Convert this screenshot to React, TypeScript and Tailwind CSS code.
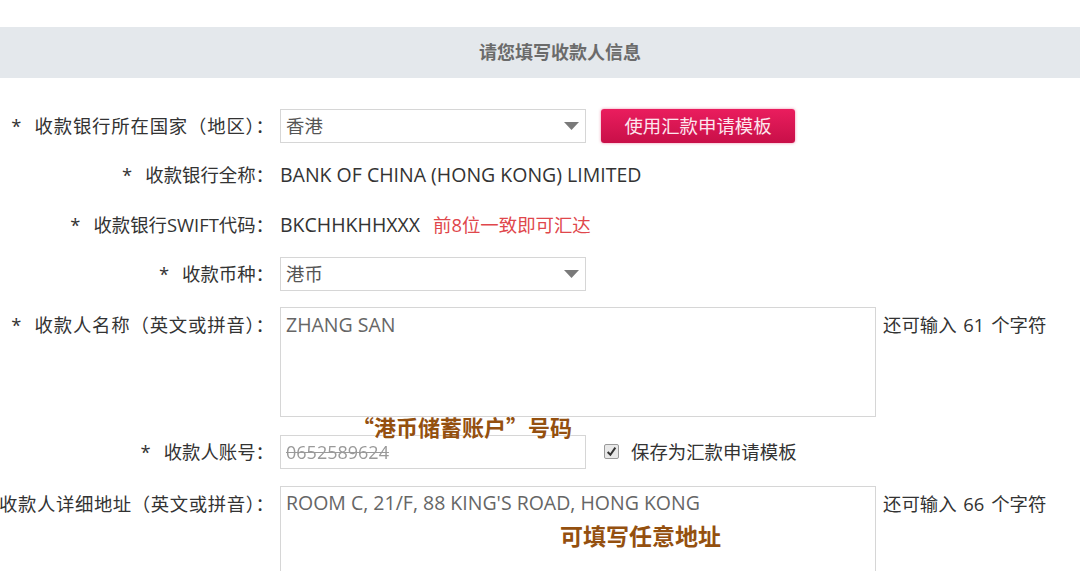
import React from 'react';

const cjk = { fontFamily: '"Open Sans", "Noto Sans CJK SC", sans-serif' };

function Arrow() {
    return (
        <svg width="15" height="8" viewBox="0 0 15 8" className="shrink-0">
            <path d="M0 0 H15 L7.5 8 Z" fill="#7a7a7a" />
        </svg>
    );
}

function Label({ children, star = true, top = false }: { children: React.ReactNode; star?: boolean; top?: boolean }) {
    return (
        <div className={`flex w-[274px] shrink-0 justify-end whitespace-nowrap text-[18.4px] leading-[22px] text-[#333] ${top ? 'pt-[7px]' : ''}`}>
            {star && <span className="mr-[13px]">*</span>}
            <span>{children}</span>
        </div>
    );
}

function Select({ value }: { value: string }) {
    return (
        <div className="flex h-[34px] w-[306px] items-center justify-between border border-[#d6d6d6] bg-white pl-[5px] pr-[6px] text-[18.4px] text-[#555]">
            <span>{value}</span>
            <Arrow />
        </div>
    );
}

function Counter({ n }: { n: number }) {
    return (
        <div className="ml-[7px] pt-[7px] text-[18.4px] leading-[22px] text-[#333] whitespace-nowrap">
            还可输入 <span className="px-[2px]">{n}</span> 个字符
        </div>
    );
}

export default function App() {
    return (
        <div className="relative h-[571px] w-[1080px] overflow-hidden bg-white" style={cjk}>
            <div className="h-[27px]" />
            <div className="flex h-[51px] items-center justify-center bg-[#e4e8ec] pl-[40px] text-[18px] font-semibold text-[#6b6b6b]">
                请您填写收款人信息
            </div>

            <div className="flex flex-col pt-[31px]">
                <div className="flex h-[34px] items-center">
                    <Label>
                        <span className="tracking-[0.8px]">收款银行所在国家（地区）</span>：
                    </Label>
                    <div className="ml-[6px] flex items-center gap-[15px]">
                        <Select value="香港" />
                        <button className="h-[34px] w-[194px] rounded-[3px] bg-gradient-to-b from-[#ea1d5e] to-[#c80f48] text-[18.4px] text-[#fde6ee] shadow-[0_0_3px_rgba(220,20,80,0.5)]">
                            使用汇款申请模板
                        </button>
                    </div>
                </div>

                <div className="mt-[15px] flex h-[34px] items-center">
                    <Label>收款银行全称：</Label>
                    <div className="ml-[6px] text-[19.5px] text-[#333]">BANK OF CHINA (HONG KONG) LIMITED</div>
                </div>

                <div className="mt-[16px] flex h-[34px] items-center">
                    <Label>收款银行SWIFT代码：</Label>
                    <div className="ml-[6px] text-[19.5px] text-[#333]">BKCHHKHHXXX</div>
                    <div className="ml-[13px] text-[18.4px] text-[#e0474c]">前8位一致即可汇达</div>
                </div>

                <div className="mt-[15px] flex h-[34px] items-center">
                    <Label>收款币种：</Label>
                    <div className="ml-[6px]">
                        <Select value="港币" />
                    </div>
                </div>

                <div className="mt-[16px] flex items-start">
                    <Label top>
                        <span className="tracking-[0.8px]">收款人名称（英文或拼音）</span>：
                    </Label>
                    <div className="ml-[6px] h-[110px] w-[596px] border border-[#d6d6d6] px-[5px] pt-[5px] text-[19.5px] leading-[24px] text-[#666]">
                        ZHANG SAN
                    </div>
                    <Counter n={61} />
                </div>

                <div className="mt-[18px] flex h-[34px] items-center">
                    <Label>收款人账号：</Label>
                    <div className="ml-[6px] flex h-[34px] w-[306px] items-center border border-[#d6d6d6] pl-[5px] text-[18px] text-[#9a9a9a]">
                        <span className="line-through blur-[0.6px]">0652589624</span>
                    </div>
                    <div className="ml-[18px] flex items-center gap-[12px] text-[18.4px] text-[#333]">
                        <span className="flex h-[15px] w-[15px] items-center justify-center rounded-[2px] border border-[#9a9a9a] bg-[#e8e8e8]">
                            <svg width="11" height="11" viewBox="0 0 10 10">
                                <path d="M1.5 5.5 L4 8 L8.5 1.5" fill="none" stroke="#333" strokeWidth="1.8" />
                            </svg>
                        </span>
                        保存为汇款申请模板
                    </div>
                </div>

                <div className="mt-[17px] flex items-start">
                    <Label top star={false}>
                        <span className="tracking-[0.6px]">收款人详细地址（英文或拼音）</span>：
                    </Label>
                    <div className="ml-[6px] h-[110px] w-[596px] border border-[#d6d6d6] px-[5px] pt-[4px] text-[19.5px] leading-[24px] text-[#666]">
                        ROOM C, 21/F, 88 KING'S ROAD, HONG KONG
                    </div>
                    <Counter n={66} />
                </div>
            </div>

            <div
                className="absolute left-[352px] top-[412px] text-[22px] font-bold leading-[28px] text-[#94500f] [text-shadow:0_0_2px_#fff]"
                style={{ fontFamily: '"Noto Sans CJK SC", sans-serif' }}
            >
                “港币储蓄账户”号码
            </div>
            <div
                className="absolute left-[560px] top-[520px] text-[23px] font-bold leading-[30px] text-[#94500f] [text-shadow:0_0_2px_#fff]"
                style={{ fontFamily: '"Noto Sans CJK SC", sans-serif' }}
            >
                可填写任意地址
            </div>
        </div>
    );
}
